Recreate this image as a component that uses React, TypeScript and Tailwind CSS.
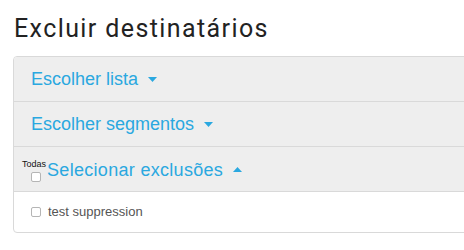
import React from 'react';

const Caret = ({ up = false }: { up?: boolean }) => (
  <svg width="9" height="5" viewBox="0 0 9 5" className="ml-[10px] fill-[#2aa8e0]">
    {up ? <path d="M0 5 L4.5 0 L9 5 Z" /> : <path d="M0 0 L9 0 L4.5 5 Z" />}
  </svg>
);

const Box = () => (
  <span className="block w-[10px] h-[10px] rounded-[2px] border border-[#b5b5b5] bg-white" />
);

export default function App() {
  return (
    <div className="w-[464px] h-[250px] overflow-hidden bg-white" style={{ fontFamily: '"Liberation Sans", Arial, sans-serif' }}>
      <h2 className="pt-[16px] pl-[14px] text-[25px] leading-[26px] tracking-[1.4px] text-[#222]" style={{ fontFamily: 'Roboto, sans-serif' }}>
        Excluir destinatários
      </h2>
      <div className="mt-[14px] ml-[13px] w-[480px] border border-[#d9d9d9] rounded-[4px] overflow-hidden">
        <div className="h-[45px] flex items-center pl-[17px] bg-[#eeeeee] border-b border-[#d9d9d9] text-[18px] leading-[20px] text-[#2aa8e0]">
          Escolher lista <Caret />
        </div>
        <div className="h-[45px] flex items-center pl-[17px] bg-[#eeeeee] border-b border-[#d9d9d9] text-[18px] leading-[20px] text-[#2aa8e0]">
          Escolher segmentos <Caret />
        </div>
        <div className="h-[45px] flex items-center pl-[8px] bg-[#eeeeee] border-b border-[#d9d9d9] text-[18px] leading-[20px] text-[#2aa8e0]">
          <div className="flex flex-col items-center mt-[2px] mr-[1px]">
            <span className="text-[9px] leading-[10px] text-[#111]">Todas</span>
            <span className="mt-[3px] ml-[3px] block w-[10px] h-[10px] rounded-[2px] border border-[#b5b5b5] bg-white" />
          </div>
          <span className="mt-[1px] tracking-[0.3px]">Selecionar exclusões</span>
          <Caret up />
        </div>
        <div className="h-[40px] flex items-center pl-[17px] gap-[7px] text-[13px] text-[#555]">
          <Box />
          <span>test suppression</span>
        </div>
      </div>
    </div>
  );
}
